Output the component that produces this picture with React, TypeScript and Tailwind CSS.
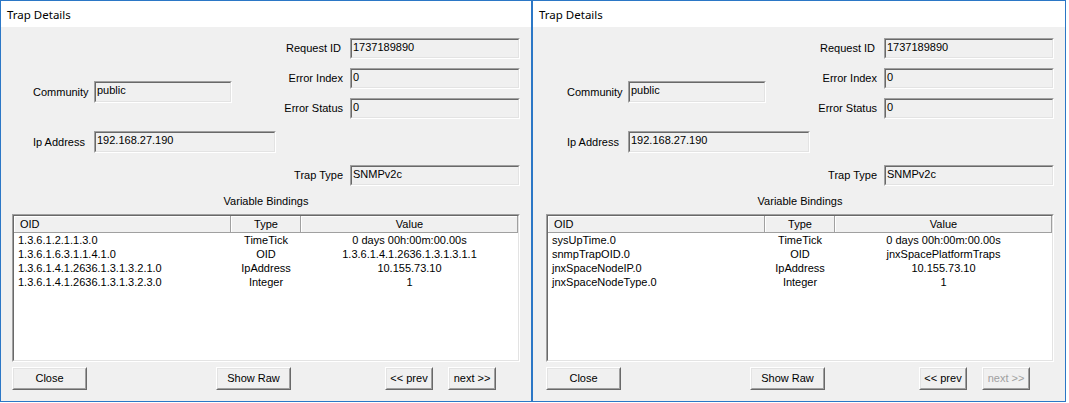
import React from 'react'

type Binding = { oid: string; type: string; value: string }

const numericRows: Binding[] = [
  { oid: '1.3.6.1.2.1.1.3.0', type: 'TimeTick', value: '0 days 00h:00m:00.00s' },
  { oid: '1.3.6.1.6.3.1.1.4.1.0', type: 'OID', value: '1.3.6.1.4.1.2636.1.3.1.3.1.1' },
  { oid: '1.3.6.1.4.1.2636.1.3.1.3.2.1.0', type: 'IpAddress', value: '10.155.73.10' },
  { oid: '1.3.6.1.4.1.2636.1.3.1.3.2.3.0', type: 'Integer', value: '1' },
]

const namedRows: Binding[] = [
  { oid: 'sysUpTime.0', type: 'TimeTick', value: '0 days 00h:00m:00.00s' },
  { oid: 'snmpTrapOID.0', type: 'OID', value: 'jnxSpacePlatformTraps' },
  { oid: 'jnxSpaceNodeIP.0', type: 'IpAddress', value: '10.155.73.10' },
  { oid: 'jnxSpaceNodeType.0', type: 'Integer', value: '1' },
]

// classic sunken edit box (read only)
const Field = ({ value, className }: { value: string; className: string }) => (
  <div className={`h-[21px] border border-t-[#a0a0a0] border-l-[#a0a0a0] border-b-white border-r-white ${className}`}>
    <div className="h-full border border-t-[#696969] border-l-[#696969] border-b-[#e3e3e3] border-r-[#e3e3e3] pl-[1px] leading-[15px] whitespace-nowrap">
      {value}
    </div>
  </div>
)

const Button = ({ label, className, disabled }: { label: string; className: string; disabled?: boolean }) => (
  <div className={`h-[23px] border border-t-white border-l-white border-b-[#696969] border-r-[#696969] ${className}`}>
    <div
      className={`h-full flex items-center justify-center border border-t-[#e3e3e3] border-l-[#e3e3e3] border-b-[#a0a0a0] border-r-[#a0a0a0] bg-[#f0f0f0] ${
        disabled ? 'text-[#a0a0a0]' : 'text-black'
      }`}
    >
      {label}
    </div>
  </div>
)

const HeaderCell = ({ label, className }: { label: string; className: string }) => (
  <div className={`h-[17px] border-r border-b border-r-[#a0a0a0] border-b-[#a0a0a0] ${className}`}>
    <div className="h-full border-t border-l border-t-white border-l-white flex items-center">{label}</div>
  </div>
)

const TrapWindow = ({
  rows,
  nextDisabled,
  width,
  bodyPad,
}: {
  rows: Binding[]
  nextDisabled?: boolean
  width: string
  bodyPad: string
}) => (
  <div className={`h-[402px] flex flex-col border border-[#2b77c6] bg-[#f0f0f0] ${width}`}>
    {/* title bar */}
    <div className="h-[26px] shrink-0 bg-white flex items-center pl-[6px] pt-[2px] text-[11.5px] text-black font-['Segoe_UI','Noto_Sans',sans-serif]">
      Trap Details
    </div>

    <div className={`flex-1 flex flex-col pt-[11px] ${bodyPad}`}>
      {/* fields */}
      <div className="flex">
        <div className="flex flex-col pl-[32px]">
          <div className="flex items-center mt-[43px]">
            <span className="w-[61px]">Community</span>
            <Field value="public" className="w-[138px] h-[22px]" />
          </div>
          <div className="flex items-center mt-[28px]">
            <span className="w-[61px]">Ip Address</span>
            <Field value="192.168.27.190" className="w-[182px] h-[22px]" />
          </div>
        </div>

        <div className="ml-auto mr-[11px] flex flex-col">
          <div className="flex items-center justify-end gap-[9px]">
            <span>Request ID</span>
            <Field value="1737189890" className="w-[170px]" />
          </div>
          <div className="flex items-center justify-end gap-[7px] mt-[9px]">
            <span>Error Index</span>
            <Field value="0" className="w-[170px] h-[20px]" />
          </div>
          <div className="flex items-center justify-end gap-[7px] mt-[9px]">
            <span>Error Status</span>
            <Field value="0" className="w-[170px] h-[20px]" />
          </div>
          <div className="flex items-center justify-end gap-[7px] mt-[46px]">
            <span>Trap Type</span>
            <Field value="SNMPv2c" className="w-[170px]" />
          </div>
        </div>
      </div>

      <div className="mt-[8px] h-[14px] leading-[14px] text-center">Variable Bindings</div>

      {/* list view */}
      <div className="mt-[6px] ml-[11px] w-[508px] h-[148px] border border-t-[#a0a0a0] border-l-[#a0a0a0] border-b-white border-r-white">
        <div className="h-full bg-white border border-t-[#696969] border-l-[#696969] border-b-[#e3e3e3] border-r-[#e3e3e3]">
          <div className="flex bg-[#f0f0f0]">
            <HeaderCell label="OID" className="w-[217px] [&>div]:pl-[5px]" />
            <HeaderCell label="Type" className="w-[70px] [&>div]:justify-center" />
            <HeaderCell label="Value" className="w-[217px] [&>div]:justify-center" />
          </div>
          {rows.map((r) => (
            <div key={r.oid} className="flex h-[14px] leading-[14px] whitespace-nowrap">
              <div className="w-[217px] pl-[4px]">{r.oid}</div>
              <div className="w-[70px] text-center">{r.type}</div>
              <div className="w-[217px] text-center">{r.value}</div>
            </div>
          ))}
        </div>
      </div>

      {/* buttons */}
      <div className="flex mt-[5px] pl-[11px]">
        <Button label="Close" className="w-[75px]" />
        <Button label="Show Raw" className="w-[75px] ml-[129px]" />
        <Button label="<< prev" className="w-[48px] ml-[94px]" />
        <Button label="next >>" className="w-[48px] ml-[15px]" disabled={nextDisabled} />
      </div>
    </div>
  </div>
)

export default function App() {
  return (
    <div className="w-[1069px] h-[403px] bg-white flex text-[11px] text-black font-['Liberation_Sans',Arial,sans-serif] overflow-hidden">
      <TrapWindow rows={numericRows} width="w-[532px]" bodyPad="pl-0" />
      <TrapWindow rows={namedRows} width="w-[534px]" bodyPad="pl-[2px]" nextDisabled />
    </div>
  )
}
